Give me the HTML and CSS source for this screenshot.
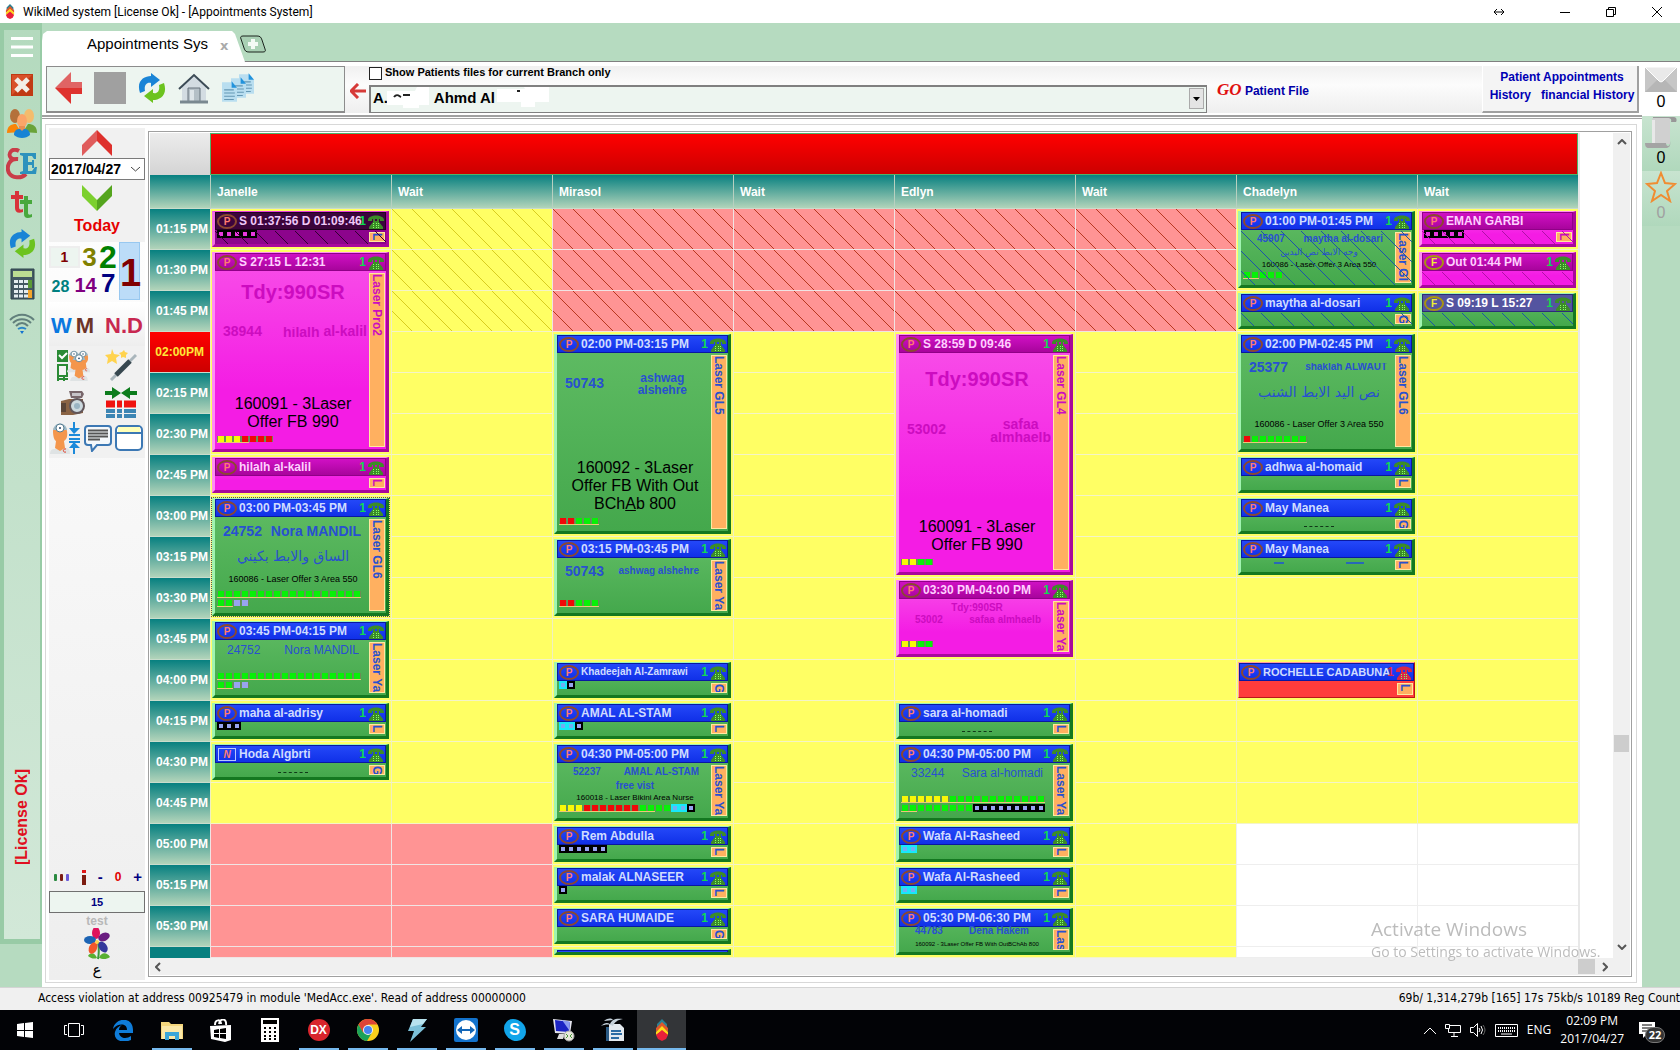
FILE: index.html
```html
<!DOCTYPE html>
<html lang="en">
<head>
    <meta charset="UTF-8">
    <title>WikiMed system [License Ok] - [Appointments System]</title>
    <link rel="stylesheet" href="styles.css">
</head>
<body>
<svg class="defs" aria-hidden="true">
    <symbol id="logo" viewBox="0 0 12 22">
        <path d="M6 0l5 5v4L6 6 1 9V5z" fill="#2a7f92"/>
        <path d="M6 3l6 6v4L6 8l-6 5V9z" fill="#e0562b"/>
        <path d="M6 7l6 6v3l-6-4-6 4v-3z" fill="#ffd91a"/>
        <path d="M6 11l6 5-2 4-4 2-4-2-2-4z" fill="#e8203a"/>
    </symbol>
    <symbol id="phone" viewBox="0 0 16 14">
        <path d="M0 5c0-6 16-6 16 0v1h-4V4H4v2H0z" fill="currentColor"/>
        <path d="M5 4h2v2h2V4h2v3l4 5v2H1v-2l4-5z" fill="currentColor"/>
        <path d="M5 8h1v1H5zM8 8h1v1H8zM10 8h1v1h-1zM5 10h1v1H5zM8 10h1v1H8zM10 10h1v1h-1zM5 12h1v1H5zM8 12h1v1H8zM10 12h1v1h-1z" fill="#8f6"/>
    </symbol>
    <symbol id="sync" viewBox="0 0 28 30">
        <path d="M2 20C-2 8 6 3 13 3V0l9 7-9 7v-4C8 9 6 13 7 18z" fill="#1a84d6"/>
        <path d="M26 10c4 12-4 17-11 17v3l-9-7 9-7v4c5 1 7-3 6-8z" fill="#6cc31f"/>
    </symbol>
    <symbol id="arrow" viewBox="0 0 27 32">
        <path d="M0 16L16 0v10h11v6H0z" fill="#e06464"/>
        <path d="M0 16h27v6H16v10z" fill="#de322e"/>
    </symbol>
    <symbol id="sheet" viewBox="0 0 14 20">
        <path d="M0 1h9l5 5v13H0z" fill="#b9def0"/>
        <path d="M9 0v6h5z" fill="#2293dc"/>
        <path d="M2 8h9M2 11h10M2 14h10M2 17h9" stroke="#6598b4"/>
    </symbol>
    <symbol id="doc" viewBox="0 0 20 32">
        <path d="M4 27c-4 0-4 5-4 5h20c0-4-1-6-5-6z" fill="#dfe3e4"/>
        <path d="M3 9c0-7 13-9 14 0 1 6-1 9-3 10l1 7-5 3-5-3 1-7C4 18 3 14 3 9z" fill="#f4964c"/>
        <path d="M3 8c2-9 13-8 14 0z" fill="#9dbac8"/>
        <circle cx="10" cy="6" r="4" fill="#fff" stroke="#567b8e"/>
        <circle cx="10" cy="6" r="1" fill="#246"/>
        <path d="M16 27c-3-1-4 4 0 3" fill="none" stroke="#e03c28"/>
    </symbol>
</svg>

<header class="titlebar">
    <svg class="logo"><use href="#logo"/></svg>
    <h1>WikiMed system [License Ok] - [Appointments System]</h1>
    <nav class="winbtns">
        <button type="button" aria-label="Resize"><svg width="12" height="8"><path d="M1 4h10M4 1L1 4l3 3M8 1l3 3-3 3" fill="none" stroke="#000"/></svg></button>
        <button type="button" aria-label="Minimize"><svg width="10" height="10"><path d="M0 5.5h10" stroke="#000"/></svg></button>
        <button type="button" aria-label="Restore"><svg width="10" height="10"><path d="M.5 2.5h7v7h-7zM2.500 2.500v-2h7v7h-2" fill="none" stroke="#000"/></svg></button>
        <button type="button" aria-label="Close"><svg width="10" height="10"><path d="M0 0l10 10M10 0L0 10" stroke="#000"/></svg></button>
    </nav>
</header>

<div class="app">
    <aside class="rail">
        <div class="rail-in">
            <button type="button" aria-label="Menu"><svg width="22" height="20"><path d="M0 1.500h22M0 10h22M0 18.500h22" stroke="#fff" stroke-width="3"/></svg></button>
            <button type="button" aria-label="Close page"><svg width="22" height="22"><path d="M0 0h22v22H0z" fill="#c03a14"/><path d="M1 1h20L1 21z" fill="#d8512a"/><path d="M5 5l12 12M17 5L5 17" stroke="#f2eee6" stroke-width="5"/></svg></button>
            <button type="button" aria-label="Patients"><svg width="30" height="30" viewBox="0 0 30 30">
                <ellipse cx="8" cy="7" rx="5" ry="7" fill="#b4713a"/><path d="M0 24c0-7 4-9 9-9l5 8z" fill="#f98508"/>
                <ellipse cx="22" cy="7" rx="5" ry="7" fill="#f4bc6c"/><path d="M30 24c0-7-4-9-9-9l-5 8z" fill="#6aa339"/>
                <ellipse cx="15" cy="12" rx="5" ry="7" fill="#fba568"/><path d="M12 17h6v5h-6z" fill="#e98f52"/><path d="M7 26c0-5 3-6 6-6l2 2 2-2c3 0 6 1 6 6-4 4-12 4-16 0z" fill="#1784d4"/></svg></button>
            <button type="button" aria-label="Language"><svg width="32" height="32" viewBox="0 0 32 32">
                <path d="M13 3C6-1 1 6 5 10c2 2 5 1 7 1-9-1-12 8-9 14 3 5 12 6 17 1" fill="none" stroke="#c93d49" stroke-width="4"/>
                <path d="M14 5h16v6h-2l-2-3h-4v6h4v-2h2v8h-2v-3h-4v6h4l3-4h2l-1 7H14v-2l3-1V8l-3-1z" fill="#2c92bd"/></svg></button>
            <button type="button" aria-label="Text tools"><svg width="22" height="29" viewBox="0 0 22 29">
                <path d="M4 1h4v4h4v4H8v8c0 3 2 3 4 2v3c-5 2-8 0-8-4V9H0V5h4z" fill="#d8333a"/>
                <path d="M13 6h4v4h4v4h-4v9c0 2 2 2 4 1v3c-5 2-8 1-8-3V14H9v-4h4z" fill="#48a83c"/></svg></button>
            <button type="button" aria-label="Refresh"><svg width="27" height="31"><use href="#sync"/></svg></button>
            <button type="button" aria-label="Calculator"><svg width="25" height="32"><path d="M1 1h23v30H1z" fill="#435862" stroke="#2f434d"/><path d="M3 3h19v6H3z" fill="#bcdc92"/><path d="M4 13.500h16M4 18.500h16M4 23.500h16M4 28h16" stroke="#e4edf0" stroke-width="3" stroke-dasharray="4 1"/><path d="M18 12h4v8h-4z" fill="#5b9a36"/><path d="M18 22h4v8h-4z" fill="#f4a52a"/></svg></button>
            <button type="button" aria-label="Network"><svg width="26" height="22" viewBox="0 0 26 22" fill="none" stroke="#62807c" stroke-width="2"><path d="M1 7c7-7 17-7 24 0M4 10c5-5 13-5 18 0M7 13c4-4 8-4 12 0"/><path d="M9 16c3-2 5-2 8 0" stroke="#2a86c8"/><path d="M11 18h4l-2 3z" fill="#1272d0" stroke="none"/></svg></button>
            <span class="license">[License Ok]</span>
        </div>
    </aside>

    <div class="work">
        <div class="tabs">
            <div class="tab"><a href="#">Appointments Sys</a><button type="button" aria-label="Close tab">x</button></div>
            <button type="button" class="newtab" aria-label="New tab"><svg width="26" height="18" viewBox="0 0 26 18"><path d="M3 1h14c3 0 4 1 5 4l3 9c1 2 0 3-2 3H9c-3 0-4-1-5-4L1 4C0 2 1 1 3 1z" fill="#a9d0b4" stroke="#1c241e" stroke-width="1"/><path d="M13 4v10M8 9h10" stroke="#f4faf5" stroke-width="4"/></svg></button>
        </div>
        <div class="page">
            <main class="content">
                <div class="toolbar">
                    <div class="tools">
                        <button type="button" aria-label="Back"><svg width="27" height="32"><use href="#arrow"/></svg></button>
                        <button type="button" aria-label="Stop"><svg width="32" height="32"><path d="M0 0h32v32H0z" fill="#a0a0a0"/></svg></button>
                        <button type="button" aria-label="Refresh"><svg width="28" height="32"><use href="#sync"/></svg></button>
                        <button type="button" aria-label="Home"><svg width="32" height="32" viewBox="0 0 32 32"><path d="M4 14L16 4l12 10v16H4z" fill="#d3dce2"/><path d="M10 16h12v14H10z" fill="#b4bfc6" stroke="#66737c"/><path d="M12 18h4v12h-4z" fill="#dde4e8"/><path d="M1 17L16 3l15 14" fill="none" stroke="#3c4b56" stroke-width="2"/><path d="M2 30h28" stroke="#7a8890" stroke-width="3"/></svg></button>
                        <button type="button" aria-label="Files"><svg width="32" height="30"><use href="#sheet" x="17" y="0" width="15" height="22"/><use href="#sheet" x="9" y="4" width="15" height="22"/><use href="#sheet" x="0" y="8" width="15" height="22"/></svg></button>
                    </div>
                    <div class="finder">
                        <button type="button" class="pick" aria-label="Choose"><svg width="16" height="16"><path d="M16 8H2M8 1L1 8l7 7" fill="none" stroke="#d63a38" stroke-width="3"/></svg></button>
                        <div class="fields">
                            <label><input type="checkbox">Show Patients files for current Branch only</label>
                            <div class="combo">
                                <select aria-label="Patient"><option>A.&nbsp;&nbsp;&nbsp;&nbsp;&nbsp;&nbsp;&nbsp;&nbsp;&nbsp;&nbsp;&nbsp;Ahmd Al</option></select>
                                <svg class="smudge" width="180" height="24"><path d="M16 4h28l2-4h12v18H48v3H32v-3H16zM126 2h28l-1-2h25v15h-14v5h-14v-5h-24z" fill="#fff"/><path d="M23 10c3-4 5-1 7 0M32 8h7M146 4h3" fill="none" stroke="#222" stroke-width="2"/></svg>
                                <span class="drop"><svg width="7" height="4"><path d="M0 0h7L3.500 4z"/></svg></span>
                            </div>
                        </div>
                        <a class="go" href="#"><i>GO</i> Patient File</a>
                    </div>
                    <div class="links">
                        <a href="#">Patient Appointments</a>
                        <span><a href="#">History</a><a href="#">financial History</a></span>
                    </div>
                </div>

                <div class="frame">
                    <aside class="side">
                        <div class="days">
                            <button type="button" aria-label="Previous day"><svg width="30" height="26"><path d="M15 0v11L0 26V15z" fill="#e05c5c"/><path d="M15 0l15 15v11L15 11z" fill="#de302c"/></svg></button>
                            <div class="date"><input type="text" value="2017/04/27" aria-label="Date"><svg width="9" height="5"><path d="M0 0l4.500 4L9 0" fill="none" stroke="#444"/></svg></div>
                            <button type="button" aria-label="Next day"><svg width="30" height="26"><path d="M0 0l15 15v11L0 11z" fill="#7cd02e"/><path d="M30 0L15 15v11l15-15z" fill="#55a51e"/></svg></button>
                            <a class="today" href="#">Today</a>
                        </div>
                        <div class="jump">
                            <div class="steps">
                                <p><button type="button" class="n1s">1</button><button type="button" class="n3">3</button><button type="button" class="n2">2</button></p>
                                <p><button type="button" class="n28">28</button><button type="button" class="n14">14</button><button type="button" class="n7">7</button></p>
                            </div>
                            <button type="button" class="n1">1</button>
                        </div>
                        <div class="spans"><button type="button" class="w">W</button><button type="button" class="m">M</button><button type="button" class="nd">N.D</button></div>
                        <div class="acts two">
                            <button type="button" aria-label="Doctors"><svg width="34" height="32"><path d="M1 1h11v12H1z" fill="#2a8a34"/><path d="M3 6l3 3 5-5" fill="none" stroke="#fff" stroke-width="2"/><path d="M2 16h9v11H2z" fill="#f4f4f4" stroke="#2a8a34" stroke-width="2"/><path d="M1 30h11M2 28v4M8 28v4" stroke="#2a8a34" stroke-width="2"/><use href="#doc" x="11" y="0" width="14" height="24"/><use href="#doc" x="20" y="0" width="14" height="24"/><use href="#doc" x="14" y="4" width="18" height="28"/></svg></button>
                            <button type="button" aria-label="Wizard"><svg width="32" height="32"><path d="M7 0l2 5 6 1-4 3 1 6-5-3-5 3 1-6-3-3 6-1z" fill="#ffd34e"/><path d="M19 1l1 2 3 1-2 2v3l-3-1-2 1v-3l-2-2 3-1z" fill="#ffd34e"/><path d="M6 31L31 6" stroke="#aab6bc" stroke-width="3"/><path d="M11 26L25 12" stroke="#37474f" stroke-width="5"/></svg></button>
                            <button type="button" aria-label="Camera"><svg width="26" height="26" viewBox="0 0 26 26"><path d="M9 1h13l2 3-2 4H11z" fill="#78666a"/><path d="M12 3h9v3h-9z" fill="#c7c4c8"/><path d="M1 11l8-2h14v14l-10 2H1z" fill="#8a6344"/><path d="M1 13h5v9H1z" fill="#5b4537"/><circle cx="17" cy="16" r="7" fill="#ccd9df" stroke="#61565a" stroke-width="2"/><circle cx="17" cy="16" r="3" fill="#9ab4c4"/></svg></button>
                            <button type="button" aria-label="Merge columns"><svg width="32" height="32"><path d="M0 4h7V0l9 6-9 6V8H0zM32 4h-7V0l-9 6 9 6V8h7z" fill="#0c7c1c"/><path d="M1 17h9M12 17h5M19 17h12" stroke="#f01410" stroke-width="7"/><path d="M1 24h9M12 24h5M19 24h12M1 29h9M12 29h5M19 29h12" stroke="#3d86b4" stroke-width="4"/></svg></button>
                        </div>
                        <div class="acts three">
                            <button type="button" aria-label="Move patient"><svg width="31" height="32"><use href="#doc" x="0" y="0" width="22" height="32"/><path d="M25 0v8M25 24v8M20 13h11M20 17h11M20 20h11" stroke="#1c8ada" stroke-width="2"/><path d="M20 6h11l-6 6zM20 26h11l-6-6z" fill="#1c8ada"/></svg></button>
                            <button type="button" aria-label="Notes"><svg width="28" height="28"><path d="M4 2h20c2 0 3 1 3 3v13c0 2-1 3-3 3H13l-5 6-1-6H4c-2 0-3-1-3-3V5c0-2 1-3 3-3z" fill="#f4f8fb" stroke="#3c78b4" stroke-width="2"/><path d="M4 6.500h20M4 9.500h20M4 12.500h20M4 15.500h12" stroke="#555" stroke-width="2"/></svg></button>
                            <button type="button" aria-label="Window"><svg width="28" height="26"><rect x="1" y="1" width="26" height="24" rx="4" fill="#fff" stroke="#3c78b4" stroke-width="2"/><path d="M3 2h22v5H3z" fill="#ffffb8"/><path d="M1 8h26" stroke="#3c78b4" stroke-width="2"/></svg></button>
                        </div>
                        <div class="foot">
                            <div class="zoom">
                                <svg width="16" height="7"><rect width="3" height="7" rx="1" fill="#2a8a40"/><rect x="6" width="3" height="7" rx="1" fill="#7c1c14"/><rect x="12" width="3" height="7" rx="1" fill="#6a5ad8"/></svg>
                                <svg width="4" height="15"><path d="M2 0v3" stroke="#e01818" stroke-width="4"/><path d="M2 5v10" stroke="#7c1c10" stroke-width="4"/></svg>
                                <button type="button">-</button><span>0</span><button type="button">+</button>
                            </div>
                            <input type="text" value="15" aria-label="Minutes per slot">
                            <span class="test">test</span>
                            <svg width="26" height="32" viewBox="0 0 26 32"><path d="M14 14c1 6 1 12 0 17" stroke="#3c9a3c" stroke-width="2" fill="none"/><path d="M13 30c-2-6-7-6-9-2 4 3 6 3 9 2zM15 30c2-6 8-6 11-1-4 3-8 2-11 1z" fill="#58b032"/><ellipse cx="12" cy="5" rx="4" ry="6" fill="#e0125c"/><ellipse cx="20" cy="9" rx="6" ry="4" transform="rotate(-25 20 9)" fill="#6a1c80"/><ellipse cx="6" cy="12" rx="6" ry="4" fill="#1c64b4"/><ellipse cx="9" cy="20" rx="4" ry="6" transform="rotate(25 9 20)" fill="#f0582c"/><ellipse cx="19" cy="19" rx="4" ry="6" transform="rotate(-35 19 19)" fill="#34389c"/><circle cx="13" cy="14" r="2" fill="#ffd34e"/></svg>
                            <span class="ain" lang="ar">ع</span>
                        </div>
                    </aside>

                    <section class="panel">
                        <div class="sheet">
                            <div class="viewport">
                                <table class="schedule">
                                    <colgroup><col class="time"><col class="doc"><col class="wait"><col class="doc"><col class="wait"><col class="doc"><col class="wait"><col class="doc"><col class="wait"></colgroup>
                                    <thead>
                                    <tr class="banner"><th class="corner"></th><th class="red" colspan="8"></th></tr>
                                    <tr class="names"><th></th><th>Janelle</th><th>Wait</th><th>Mirasol</th><th>Wait</th><th>Edlyn</th><th>Wait</th><th>Chadelyn</th><th>Wait</th></tr>
                                    </thead>
                                    <tbody>
                                    <tr>
                                        <th>01:15 PM</th>
                                        <td><div class="card plum past"><div class="head"><b>P</b><span>S 01:37:56 D 01:09:46</span><em>1</em><svg><use href="#phone"/></svg></div><div class="body"><div class="info"><div class="dots"><i class="k" style="--n:5"></i></div></div><div class="room">L</div></div></div></td>
                                        <td class="gone"></td>
                                        <td class="off gone"></td><td class="off gone"></td><td class="off gone"></td><td class="off gone"></td>
                                        <td rowspan="2"><div class="card past"><div class="head"><b>P</b><span>01:00 PM-01:45 PM</span><em>1</em><svg><use href="#phone"/></svg></div><div class="body"><div class="info"><div class="pair small"><span>45907</span><span>maytha al-dosari</span></div><p class="ar tiny" lang="ar">وجه الابط نص اليدين</p><p class="offer mini tight">160086 - Laser Offer 3 Area 550</p><div class="dots"><i class="g u" style="--n:2"></i><i class="g" style="--n:3"></i></div></div><div class="room">Laser Gl</div></div></div></td>
                                        <td><div class="card pink past"><div class="head"><b>P</b><span>EMAN GARBI</span></div><div class="body"><div class="info"><div class="dots"><i class="k" style="--n:5"></i></div></div><div class="room">L</div></div></div></td>
                                    </tr>
                                    <tr>
                                        <th>01:30 PM</th>
                                        <td rowspan="5"><div class="card pink"><div class="head"><b>P</b><span>S 27:15 L 12:31</span><em>1</em><svg><use href="#phone"/></svg></div><div class="body"><div class="info"><p class="due">Tdy:990SR</p><div class="pair"><span>38944</span><span><span class="cut">hilalh</span> al-kalil</span></div><p class="offer">160091 - 3Laser Offer FB 990</p><div class="dots"><i class="y u" style="--n:3"></i><i class="r u" style="--n:1"></i><i class="r" style="--n:3"></i></div></div><div class="room">Laser Pro2</div></div></div></td>
                                        <td class="gone"></td>
                                        <td class="off gone"></td><td class="off gone"></td><td class="off gone"></td><td class="off gone"></td>
                                        <td><div class="card pink past"><div class="head"><b class="f">F</b><span>Out 01:44 PM</span><em>1</em><svg><use href="#phone"/></svg></div></div></td>
                                    </tr>
                                    <tr>
                                        <th>01:45 PM</th>
                                        <td class="gone"></td>
                                        <td class="off gone"></td><td class="off gone"></td><td class="off gone"></td><td class="off gone"></td>
                                        <td><div class="card past"><div class="head"><b>P</b><span>maytha al-dosari</span><em>1</em><svg><use href="#phone"/></svg></div><div class="body"><div class="info"></div><div class="room">G</div></div></div></td>
                                        <td><div class="card late past"><div class="head"><b class="f">F</b><span>S 09:19 L 15:27</span><em>1</em><svg><use href="#phone"/></svg></div></div></td>
                                    </tr>
                                    <tr>
                                        <th class="now">02:00PM</th>
                                        <td></td>
                                        <td rowspan="5"><div class="card"><div class="head"><b>P</b><span>02:00 PM-03:15 PM</span><em>1</em><svg><use href="#phone"/></svg></div><div class="body"><div class="info"><div class="pair tall"><span>50743</span><span class="name">ashwag <span class="cut">alshehre</span></span></div><p class="offer">160092 - 3Laser Offer FB With Out BCh<u>A</u>b 800</p><div class="dots"><i class="r u" style="--n:2"></i><i class="g u" style="--n:3"></i></div></div><div class="room">Laser GL5</div></div></div></td>
                                        <td></td>
                                        <td rowspan="6"><div class="card pink"><div class="head"><b>P</b><span>S 28:59 D 09:46</span><em>1</em><svg><use href="#phone"/></svg></div><div class="body"><div class="info"><p class="due tall">Tdy:990SR</p><div class="pair"><span>53002</span><span class="name big">safaa <span class="cut">almhaelb</span></span></div><p class="offer">160091 - 3Laser Offer FB 990</p><div class="dots"><i class="y" style="--n:2"></i><i class="g" style="--n:2"></i></div></div><div class="room">Laser GL4</div></div></div></td>
                                        <td></td>
                                        <td rowspan="3"><div class="card"><div class="head"><b>P</b><span>02:00 PM-02:45 PM</span><em>1</em><svg><use href="#phone"/></svg></div><div class="body"><div class="info"><div class="pair mid"><span>25377</span><span class="cut narrow">shaklah ALWAUT</span></div><p class="ar" lang="ar">نص اليد الابط الشنب</p><p class="offer mini">160086 - Laser Offer 3 Area 550</p><div class="dots"><i class="r u" style="--n:1"></i><i class="g u" style="--n:7"></i></div></div><div class="room">Laser GL6</div></div></div></td>
                                        <td></td>
                                    </tr>
                                    <tr><th>02:15 PM</th><td></td><td></td><td></td><td></td></tr>
                                    <tr><th>02:30 PM</th><td></td><td></td><td></td><td></td></tr>
                                    <tr>
                                        <th>02:45 PM</th>
                                        <td><div class="card pink"><div class="head"><b>P</b><span>hilalh al-kalil</span><em>1</em><svg><use href="#phone"/></svg></div><div class="body"><div class="info"></div><div class="room">L</div></div></div></td>
                                        <td></td><td></td><td></td>
                                        <td><div class="card"><div class="head"><b>P</b><span>adhwa al-homaid</span><em>1</em><svg><use href="#phone"/></svg></div><div class="body"><div class="info"></div><div class="room">L</div></div></div></td>
                                        <td></td>
                                    </tr>
                                    <tr>
                                        <th>03:00 PM</th>
                                        <td rowspan="3"><div class="card picked"><div class="head"><b>P</b><span>03:00 PM-03:45 PM</span><em>1</em><svg><use href="#phone"/></svg></div><div class="body"><div class="info"><div class="pair mid"><span>24752</span><span class="cut">Nora MANDIL</span></div><p class="ar" lang="ar">الساق والابط بكيني</p><p class="offer mini">160086 - Laser Offer 3 Area 550</p><div class="dots"><i class="g u" style="--n:18"></i><i class="g u" style="--n:2"></i><i class="l" style="--n:2"></i></div></div><div class="room">Laser GL6</div></div></div></td>
                                        <td></td><td></td><td></td>
                                        <td><div class="card"><div class="head"><b>P</b><span>May Manea</span><em>1</em><svg><use href="#phone"/></svg></div><div class="body"><div class="info"><div class="trace"></div></div><div class="room">G</div></div></div></td>
                                        <td></td>
                                    </tr>
                                    <tr>
                                        <th>03:15 PM</th>
                                        <td></td>
                                        <td rowspan="2"><div class="card"><div class="head"><b>P</b><span>03:15 PM-03:45 PM</span><em>1</em><svg><use href="#phone"/></svg></div><div class="body"><div class="info"><div class="pair short"><span>50743</span><span class="sm">ashwag alshehre</span></div><div class="dots"><i class="r u" style="--n:2"></i><i class="g u" style="--n:3"></i></div></div><div class="room">Laser Ya</div></div></div></td>
                                        <td></td><td></td>
                                        <td><div class="card"><div class="head"><b>P</b><span>May Manea</span><em>1</em><svg><use href="#phone"/></svg></div><div class="body"><div class="info"><div class="trace blue"></div></div><div class="room">L</div></div></div></td>
                                        <td></td>
                                    </tr>
                                    <tr>
                                        <th>03:30 PM</th>
                                        <td></td><td></td>
                                        <td rowspan="2"><div class="card pink"><div class="head"><b>P</b><span>03:30 PM-04:00 PM</span><em>1</em><svg><use href="#phone"/></svg></div><div class="body"><div class="info"><p class="due little">Tdy:990SR</p><div class="pair small low"><span>53002</span><span>safaa almhaelb</span></div><div class="dots"><i class="y" style="--n:2"></i><i class="g" style="--n:2"></i></div></div><div class="room">Laser Ya</div></div></div></td>
                                        <td></td><td></td><td></td>
                                    </tr>
                                    <tr>
                                        <th>03:45 PM</th>
                                        <td rowspan="2"><div class="card"><div class="head"><b>P</b><span>03:45 PM-04:15 PM</span><em>1</em><svg><use href="#phone"/></svg></div><div class="body"><div class="info"><div class="pair thin"><span>24752</span><span class="cut">Nora MANDIL</span></div><div class="dots"><i class="g u" style="--n:18"></i><i class="g u" style="--n:2"></i><i class="l" style="--n:2"></i></div></div><div class="room">Laser Ya</div></div></div></td>
                                        <td></td><td></td><td></td><td></td><td></td><td></td>
                                    </tr>
                                    <tr>
                                        <th>04:00 PM</th>
                                        <td></td>
                                        <td><div class="card"><div class="head"><b>P</b><span class="sm">Khadeejah Al-Zamrawi</span><em>1</em><svg><use href="#phone"/></svg></div><div class="body"><div class="info"><div class="dots"><i class="c" style="--n:1"></i><i class="k" style="--n:1"></i></div></div><div class="room">G</div></div></div></td>
                                        <td></td><td></td><td></td>
                                        <td><div class="card red"><div class="head"><b>P</b><span class="long">ROCHELLE CADABUNA</span><em>1</em><svg><use href="#phone"/></svg></div><div class="body"><div class="info"></div><div class="room">L</div></div></div></td>
                                        <td></td>
                                    </tr>
                                    <tr>
                                        <th>04:15 PM</th>
                                        <td><div class="card"><div class="head"><b>P</b><span>maha al-adrisy</span><em>1</em><svg><use href="#phone"/></svg></div><div class="body"><div class="info"><div class="dots"><i class="k" style="--n:3"></i></div></div><div class="room">L</div></div></div></td>
                                        <td></td>
                                        <td><div class="card"><div class="head"><b>P</b><span>AMAL AL-STAM</span><em>1</em><svg><use href="#phone"/></svg></div><div class="body"><div class="info"><div class="dots"><i class="c" style="--n:2"></i><i class="k" style="--n:1"></i></div></div><div class="room">L</div></div></div></td>
                                        <td></td>
                                        <td><div class="card"><div class="head"><b>P</b><span>sara al-homadi</span><em>1</em><svg><use href="#phone"/></svg></div><div class="body"><div class="info"><div class="trace"></div></div><div class="room">L</div></div></div></td>
                                        <td></td><td></td><td></td>
                                    </tr>
                                    <tr>
                                        <th>04:30 PM</th>
                                        <td><div class="card"><div class="head"><b class="n">N</b><span>Hoda Algbrti</span><em>1</em><svg><use href="#phone"/></svg></div><div class="body"><div class="info"><div class="trace"></div></div><div class="room">G</div></div></div></td>
                                        <td></td>
                                        <td rowspan="2"><div class="card"><div class="head"><b>P</b><span>04:30 PM-05:00 PM</span><em>1</em><svg><use href="#phone"/></svg></div><div class="body"><div class="info"><div class="pair small"><span>52237</span><span class="cut">AMAL AL-STAM</span></div><p class="note">free vist</p><p class="offer mini tight">160018 - Laser Bikini Area Nurse</p><div class="dots"><i class="y u" style="--n:3"></i><i class="r u" style="--n:7"></i><i class="g u" style="--n:2"></i><i class="g" style="--n:2"></i><i class="c" style="--n:2"></i><i class="k" style="--n:1"></i></div></div><div class="room">Laser Ya</div></div></div></td>
                                        <td></td>
                                        <td rowspan="2"><div class="card"><div class="head"><b>P</b><span>04:30 PM-05:00 PM</span><em>1</em><svg><use href="#phone"/></svg></div><div class="body"><div class="info"><div class="pair thin"><span>33244</span><span class="cut">Sara al-homadi</span></div><div class="dots"><i class="y u" style="--n:6"></i><i class="g u" style="--n:12"></i><i class="g u" style="--n:2"></i><i class="g" style="--n:7"></i><i class="k" style="--n:9"></i></div></div><div class="room">Laser Ya</div></div></div></td>
                                        <td></td><td></td><td></td>
                                    </tr>
                                    <tr><th>04:45 PM</th><td></td><td></td><td></td><td></td><td></td><td></td></tr>
                                    <tr>
                                        <th>05:00 PM</th>
                                        <td class="off"></td><td class="off"></td>
                                        <td><div class="card"><div class="head"><b>P</b><span>Rem Abdulla</span><em>1</em><svg><use href="#phone"/></svg></div><div class="body"><div class="info"><div class="dots"><i class="k" style="--n:6"></i></div></div><div class="room">L</div></div></div></td>
                                        <td></td>
                                        <td><div class="card"><div class="head"><b>P</b><span>Wafa Al-Rasheed</span><em>1</em><svg><use href="#phone"/></svg></div><div class="body"><div class="info"><div class="dots"><i class="c" style="--n:2"></i></div></div><div class="room">L</div></div></div></td>
                                        <td></td><td class="free"></td><td class="free"></td>
                                    </tr>
                                    <tr>
                                        <th>05:15 PM</th>
                                        <td class="off"></td><td class="off"></td>
                                        <td><div class="card"><div class="head"><b>P</b><span>malak ALNASEER</span><em>1</em><svg><use href="#phone"/></svg></div><div class="body"><div class="info"><div class="dots"><i class="k" style="--n:1"></i></div></div><div class="room">L</div></div></div></td>
                                        <td></td>
                                        <td><div class="card"><div class="head"><b>P</b><span>Wafa Al-Rasheed</span><em>1</em><svg><use href="#phone"/></svg></div><div class="body"><div class="info"><div class="dots"><i class="c" style="--n:2"></i></div></div><div class="room">L</div></div></div></td>
                                        <td></td><td class="free"></td><td class="free"></td>
                                    </tr>
                                    <tr>
                                        <th>05:30 PM</th>
                                        <td class="off"></td><td class="off"></td>
                                        <td><div class="card"><div class="head"><b>P</b><span>SARA HUMAIDE</span><em>1</em><svg><use href="#phone"/></svg></div><div class="body"><div class="info"></div><div class="room">G</div></div></div></td>
                                        <td></td>
                                        <td rowspan="2"><div class="card"><div class="head"><b>P</b><span>05:30 PM-06:30 PM</span><em>1</em><svg><use href="#phone"/></svg></div><div class="body"><div class="info"><div class="pair small clip"><span>44783</span><span>Dena Hakem</span></div><p class="offer micro">160092 - 3Laser Offer FB With OutBChAb 800</p></div><div class="room">Lase</div></div></div></td>
                                        <td></td><td class="free"></td><td class="free"></td>
                                    </tr>
                                    <tr class="rest">
                                        <th></th>
                                        <td class="off"></td><td class="off"></td>
                                        <td><div class="card"><div class="head"></div></div></td>
                                        <td></td><td></td><td class="free"></td><td class="free"></td>
                                    </tr>
                                    </tbody>
                                </table>
                            </div>
                            <div class="vbar">
                                <svg width="10" height="6"><path d="M1 5l4-4 4 4" fill="none" stroke="#555" stroke-width="2"/></svg>
                                <span></span>
                                <svg width="10" height="6"><path d="M1 1l4 4 4-4" fill="none" stroke="#555" stroke-width="2"/></svg>
                            </div>
                        </div>
                        <div class="hbar">
                            <svg width="6" height="10"><path d="M5 1L1 5l4 4" fill="none" stroke="#555" stroke-width="2"/></svg>
                            <span></span>
                            <svg width="6" height="10"><path d="M1 1l4 4-4 4" fill="none" stroke="#555" stroke-width="2"/></svg>
                        </div>
                    </section>
                </div>
            </main>

            <aside class="alerts">
                <a class="mail" href="#"><svg width="32" height="25"><path d="M0 0h32v25H0z" fill="#c6c6c6"/><path d="M0 25L16 9l16 16z" fill="#b6b6b6"/><path d="M0 0h32L18 14q-2 2-4 0z" fill="#e9e9e9" stroke="#fff"/></svg>0</a>
                <a href="#"><svg width="32" height="32"><path d="M9 1h16v27H7V4c0-2 1-3 2-3z" fill="#d0d0d0"/><path d="M7 4h3v24H7z" fill="#e8e8e8"/><path d="M8 1h21c3 0 3 4 2 5h-5c1-3-1-4-3-4H8z" fill="#989898"/><path d="M0 27h21c0 4 4 4 4 0v-2c1 5-1 7-4 7H4c-3 0-4-2-4-5z" fill="#a4a4a4"/></svg>0</a>
                <a class="none" href="#"><svg width="32" height="32"><path d="M16 2l4 10 10 1-8 7 3 10-9-6-9 6 3-10-8-7 10-1z" fill="none" stroke="#f08c32" stroke-width="2"/></svg>0</a>
            </aside>
        </div>
    </div>
</div>

<footer class="status">
    <span>Access violation at address 00925479 in module 'MedAcc.exe'. Read of address 00000000</span>
    <span>69b/ 1,314,279b [165] 17s 75kb/s 10189 Reg Count</span>
</footer>

<nav class="taskbar">
    <button type="button" aria-label="Start"><svg width="16" height="16"><path d="M0 2l7-1v7H0zM8 1l8-1v8H8zM0 9h7v6l-7-1zM8 9h8v7l-8-1z" fill="#fff"/></svg></button>
    <button type="button" class="view" aria-label="Task view"><svg width="20" height="14" fill="none" stroke="#fff"><path d="M4.500.5h11v13h-11zM3 2.500H.5v9H3M17 2.500h2.500v9H17"/></svg></button>
    <button type="button" aria-label="Edge"><svg width="20" height="21" viewBox="0 0 20 21"><path d="M0 9C2-3 20-4 20 10v3H6c1 6 8 6 12 3v4C9 24 0 20 2 12c1-4 4-6 7-7-2 1-3 3-3 5h8C14 3 5 3 0 9z" fill="#0f7cd8"/></svg></button>
    <button type="button" class="open" aria-label="Explorer"><svg width="22" height="19"><path d="M0 1h8l2 2h12v15H0z" fill="#f4d67c"/><path d="M1 5h20v13H1z" fill="#fbe8a8"/><path d="M4 11h14v8h-4v-4H8v4H4z" fill="#3aa6d8"/></svg></button>
    <button type="button" aria-label="Store"><svg width="22" height="23"><path d="M5 6c0-6 6-6 6-1M9 5c1-6 8-6 7 1" fill="none" stroke="#fff" stroke-width="2"/><path d="M0 7l21-1v15l-6 2-14-3z" fill="#fff"/><path d="M4 11l5-1v4H4zM10 10l6-1v5h-6zM4 15h5v4l-5-1zM10 15h6v5l-6-1z" fill="#000"/></svg></button>
    <button type="button" aria-label="Calculator"><svg width="18" height="24"><path d="M0 0h18v24H0z" fill="#fff"/><path d="M2 2h14v4H2z" fill="#000"/><path d="M3 10h13M3 14h13M3 18h13M3 21h13" stroke="#000" stroke-width="2" stroke-dasharray="2 3"/></svg></button>
    <button type="button" class="open" aria-label="DX"><span class="dx">DX</span></button>
    <button type="button" class="open" aria-label="Chrome"><svg width="22" height="22" viewBox="0 0 22 22"><circle cx="11" cy="11" r="11" fill="#f9cf1c"/><path d="M1.500 5.500a11 11 0 0 1 19 0H11L6 14z" fill="#dd4436"/><path d="M1.500 5.500A11 11 0 0 0 10 22l5-8.500H6z" fill="#1ba259"/><circle cx="11" cy="11" r="5" fill="#f2f2f2"/><circle cx="11" cy="11" r="4" fill="#4684f0"/></svg></button>
    <button type="button" class="open" aria-label="Bolt"><svg width="20" height="23"><path d="M6 0h14l-6 8h5L3 23l4-11H1z" fill="#7cc0d8"/><path d="M6 0h14l-4 5-13 3z" fill="#b8e2ee"/></svg></button>
    <button type="button" class="open" aria-label="TeamViewer"><svg width="24" height="24"><rect width="24" height="24" rx="2" fill="#1272cc"/><circle cx="12" cy="12" r="10" fill="#fff"/><path d="M3 12l5-4v3h8V8l5 4-5 4v-3H8v3z" fill="#1266b8"/></svg></button>
    <button type="button" class="open" aria-label="Skype"><span class="skype">S</span></button>
    <button type="button" class="open" aria-label="Remote desktop"><svg width="22" height="24"><path d="M0 1l19 2-2 13-15-1z" fill="#e4e4ee"/><path d="M2 2l15 2-1 10-13-1z" fill="#1c24c4"/><path d="M9 2l8 2-1 8z" fill="#8c9cf0"/><path d="M6 16h6l-2 5H4z" fill="#ddd"/><circle cx="16" cy="18" r="5" fill="#e8e8dc" stroke="#aaa"/><path d="M13 20l2-2-2-2M19 20l-2-2 2-2" stroke="#4a9a3c" fill="none"/></svg></button>
    <button type="button" class="open" aria-label="Writer"><svg width="24" height="24"><path d="M5 9h4v14H5z" fill="#2a5a84"/><path d="M8 6h11l4 4v13H8z" fill="#e4eaf0"/><path d="M10 13h10M10 16h11M10 20h8" stroke="#2c6ca4" stroke-width="2"/><path d="M0 8c3-3 6-4 9-2 2-5 6-6 13-5-6 1-8 3-10 7-4-2-7-2-12 0zM3 3c4-3 7-3 9-1" fill="#c4d0da"/></svg></button>
    <button type="button" class="open active" aria-label="WikiMed"><svg width="12" height="24"><use href="#logo"/></svg></button>
    <div class="tray">
        <svg width="12" height="7"><path d="M0 7l6-6 6 6" fill="none" stroke="#fff"/></svg>
        <svg width="16" height="14" fill="none" stroke="#fff"><path d="M5 2.500h10.500v7H3.500V6M9 10v3M6 13.500h7M.5 1.500h4v4h-4z"/></svg>
        <svg width="16" height="14" fill="none" stroke="#fff"><path d="M.5 4.500h3l4-4v13l-4-4h-3z"/><path d="M9 5q2 2 0 4M11 3q3 4 0 8" /><path d="M13 2q4 5 0 10" stroke="#666"/></svg>
        <svg width="23" height="13" fill="none" stroke="#fff"><path d="M.5.5h22v12H.5z"/><path d="M3 4h17M3 7h17" stroke-dasharray="1 1" stroke-width="2"/><path d="M6 10h11"/></svg>
        <span>ENG</span>
        <time>02:09 PM<br>2017/04/27</time>
        <button type="button" class="notes" aria-label="Notifications"><svg width="16" height="16"><path d="M0 0h16v12H8l-4 4v-4H0z" fill="#fff"/><path d="M3 3h10M3 6h10M3 9h6" stroke="#000"/></svg><span>22</span></button>
    </div>
</nav>

<div class="watermark"><strong>Activate Windows</strong>Go to Settings to activate Windows.</div>
</body>
</html>
```
FILE: styles.css
```css
* {
    margin: 0;
    padding: 0;
    box-sizing: border-box;
}
body {
    display: flex;
    flex-direction: column;
    min-height: 100vh;
    background: #b6dbc0;
    font: 12px/16px "Liberation Sans", Arial, sans-serif;
    color: #000;
}
button {
    border: 0;
    background: none;
    font: inherit;
    color: inherit;
}
a {
    color: inherit;
    text-decoration: none;
}
svg {
    display: block;
    flex: none;
}
.defs {
    position: absolute;
    width: 0;
    height: 0;
}

/* window title */
.titlebar {
    display: flex;
    align-items: center;
    height: 23px;
    padding-left: 5px;
    background: #fff;
}
.titlebar .logo {
    width: 10px;
    height: 15px;
}
.titlebar h1 {
    margin-left: 8px;
    font-family: Roboto, "Noto Sans", sans-serif;
    font-size: 12px;
    font-weight: normal;
}
.winbtns {
    display: flex;
    margin-left: auto;
}
.winbtns button {
    display: flex;
    align-items: center;
    justify-content: center;
    width: 46px;
    height: 20px;
}
.winbtns button:first-child {
    width: 86px;
}

.app {
    display: flex;
    flex: 1;
}

/* green rail */
.rail {
    width: 42px;
    padding: 7px 2px 5px 4px;
    margin-bottom: 43px;
    background: #98cba6;
}
.rail-in {
    display: flex;
    flex-direction: column;
    align-items: center;
    gap: 9px;
    height: 100%;
    padding-top: 7px;
    background: linear-gradient(#b4dabe, #d2e8d8);
}
.rail-in button {
    display: flex;
    align-items: center;
    justify-content: center;
    min-height: 30px;
}
.rail-in button:first-child {
    min-height: 20px;
    margin-bottom: 4px;
}
.license {
    margin-top: auto;
    margin-bottom: 74px;
    writing-mode: vertical-rl;
    transform: rotate(180deg);
    font-size: 16px;
    font-weight: bold;
    color: #e01020;
}

/* tabs */
.work {
    display: flex;
    flex-direction: column;
    flex: 1;
    min-width: 0;
}
.tabs {
    display: flex;
    align-items: flex-end;
    height: 39px;
    background: linear-gradient(#808080, #808080) bottom / 100% 1px no-repeat;
}
.tab {
    display: flex;
    align-items: center;
    gap: 12px;
    width: 203px;
    height: 31px;
    padding: 0 0 5px 45px;
    background: #fff;
    clip-path: polygon(0 10px, 1px 3px, 5px 0, 190px 0, 193px 3px, 100% 100%, 0 100%);
    font-size: 15px;
}
.tab button {
    font: bold 13px/16px "DejaVu Sans", sans-serif;
    color: #aaa;
    padding-top: 4px;
}
.newtab {
    margin: 0 0 9px -5px;
}

.page {
    display: flex;
    flex: 1;
}
.content {
    display: flex;
    flex-direction: column;
    flex: 1;
    min-width: 0;
    padding-bottom: 4px;
    background: #fff;
}

/* toolbar */
.toolbar {
    display: flex;
    height: 55px;
    padding: 4px 3px 2px 4px;
    border-bottom: 2px solid #a0a0a0;
}
.tools {
    display: flex;
    align-items: center;
    gap: 12px;
    width: 299px;
    padding: 0 0 2px 8px;
    border: 1px solid #8c8c8c;
    border-width: 1px 1px 2px;
    background: #edf5f0;
}
.finder {
    display: flex;
    align-items: center;
    flex: 1;
    padding-left: 5px;
    background: linear-gradient(#f0f0f0, #fcfcfc 40%, #eee);
}
.pick {
    margin-right: 3px;
    padding-top: 2px;
}
.fields {
    width: 838px;
}
.fields label {
    display: flex;
    align-items: flex-start;
    height: 19px;
    font-size: 11px;
    font-weight: bold;
    line-height: 12px;
}
.fields label input {
    appearance: none;
    width: 13px;
    height: 13px;
    margin: 1px 3px 0 0;
    border: 1px solid #222;
    background: #fff;
}
.combo {
    position: relative;
    display: flex;
}
.combo select {
    appearance: none;
    width: 100%;
    height: 28px;
    padding: 0 0 4px 2px;
    border: 2px solid #808080;
    border-width: 2px 1px 1px 2px;
    border-radius: 0;
    background: #edf5f0;
    font: bold 15px/20px "Liberation Sans", Arial, sans-serif;
    color: #000;
}
.smudge {
    position: absolute;
    left: 2px;
    top: 2px;
    pointer-events: none;
}
.drop {
    position: absolute;
    right: 3px;
    top: 3px;
    display: flex;
    align-items: center;
    justify-content: center;
    width: 15px;
    height: 21px;
    border: 1px solid #aaa;
    background: #e4e4e4;
    pointer-events: none;
}
.go {
    margin-left: 10px;
    font-weight: bold;
    color: #0000a8;
}
.go i {
    font: italic bold 17px/20px "Liberation Serif", serif;
    color: #e01010;
}
.links {
    display: flex;
    flex-direction: column;
    align-items: center;
    gap: 2px;
    width: 157px;
    padding: 3px 0 0 4px;
    border-left: 1px solid #fff;
    border-right: 2px solid #a0a0a0;
    border-bottom: 2px solid #a0a0a0;
    background: #f4f4f4;
    font-weight: bold;
    color: #0000b4;
    white-space: nowrap;
}
.links span {
    display: flex;
    gap: 10px;
}

/* workspace frame */
.frame {
    display: flex;
    flex: 1;
    gap: 3px;
    margin: 1px 0 0;
    padding: 9px 10px 3px 7px;
    border-top: 1px solid #a0a0a0;
    background: linear-gradient(#d8d8d8, #d8d8d8) 3px 5px / calc(100% - 8px) 1px no-repeat,
        linear-gradient(#d8d8d8, #d8d8d8) 3px 5px / 1px 100% no-repeat,
        linear-gradient(#d8d8d8, #d8d8d8) right 5px top 5px / 1px 100% no-repeat,
        linear-gradient(#d8d8d8, #d8d8d8) 3px 100% / calc(100% - 8px) 1px no-repeat;
}

/* side panel */
.side {
    display: flex;
    flex-direction: column;
    width: 96px;
    background: linear-gradient(#fff, #eee);
}
.days {
    display: flex;
    flex-direction: column;
    align-items: center;
    height: 114px;
    padding-top: 2px;
    background: #f1f1f1;
}
.date {
    display: flex;
    align-items: center;
    width: 100%;
    height: 22px;
    margin: 2px 0 5px;
    padding: 0 4px 0 1px;
    border: 1px solid #7a7a7a;
    background: #fff;
}
.date input {
    width: 80px;
    border: 0;
    font: bold 14px/18px "Liberation Sans", Arial, sans-serif;
}
.today {
    margin-top: 5px;
    font-size: 16px;
    font-weight: bold;
    line-height: 20px;
    color: #e60000;
}
.jump {
    display: flex;
    height: 60px;
    font-weight: bold;
}
.steps {
    flex: 1;
}
.steps p {
    display: flex;
    align-items: center;
    height: 29px;
}
.steps p + p {
    align-items: baseline;
    gap: 3px;
    padding: 4px 0 0 2px;
}
.n1s {
    width: 31px;
    height: 22px;
    border: 2px solid #eee;
    background: #edf5f0;
    font-size: 14px;
    color: #800000;
}
.n3 {
    width: 19px;
    font-size: 26px;
    color: #808000;
}
.n2 {
    font-size: 32px;
    color: #008000;
}
.n28 {
    width: 19px;
    font-size: 16px;
    color: #008080;
}
.n14 {
    width: 25px;
    font-size: 20px;
    color: #800080;
}
.n7 {
    font-size: 26px;
    color: #000080;
}
.n1 {
    width: 21px;
    height: 58px;
    margin-right: 5px;
    padding-top: 4px;
    border: 1px solid #98c8f0;
    background: #bcdcf8;
    font-size: 38px;
    color: #800000;
}
.spans {
    display: flex;
    align-items: center;
    gap: 4px;
    height: 44px;
    padding: 4px 2px 0;
    background: linear-gradient(#fff, #eee);
    font-size: 22px;
    font-weight: bold;
    line-height: 24px;
}
.w { color: #0a78e0; }
.m { color: #6c3428; }
.nd {
    margin-left: auto;
    color: #c82850;
}
.acts {
    display: flex;
    flex-wrap: wrap;
    align-items: center;
    background: #f1f1f1;
}
.acts button {
    display: flex;
    align-items: center;
    justify-content: center;
}
.two button {
    width: 50%;
    height: 38px;
}
.three {
    justify-content: space-between;
    height: 36px;
    padding: 0 2px 4px 0;
}
.foot {
    display: flex;
    flex-direction: column;
    align-items: center;
    margin-top: auto;
}
.zoom {
    display: flex;
    align-items: center;
    justify-content: space-between;
    width: 100%;
    height: 28px;
    padding: 0 3px 0 5px;
    font-weight: bold;
    color: #000080;
}
.zoom button {
    font-size: 15px;
}
.zoom span {
    color: #e00000;
}
.foot input {
    width: 100%;
    height: 22px;
    border: 1px solid #707070;
    background: #edf5f0;
    font: bold 11px/20px "Liberation Sans", Arial, sans-serif;
    text-align: center;
    color: #000080;
}
.test {
    padding-top: 2px;
    font-weight: bold;
    color: #b8b8b8;
    line-height: 13px;
}
.ain {
    font: 15px/20px "DejaVu Sans", sans-serif;
}

/* schedule */
.panel {
    display: flex;
    flex-direction: column;
    flex: 1;
    min-width: 0;
    margin: 3px 0;
    padding: 1px;
    border: 1px solid #a0a0a0;
    background: #fff;
}
.sheet {
    display: flex;
    flex: 1;
}
.viewport {
    flex: 1;
    min-width: 0;
    margin-right: 33px;
    border-right: 3px solid #e8e8e8;
}
.schedule {
    width: 100%;
    table-layout: fixed;
    border-spacing: 0;
}
.time { width: 60px; }
.doc { width: 181px; }
.wait { width: 161px; }
.schedule th {
    padding: 0 2px 0 0;
    border-bottom: 1px solid #c8dccc;
    background: linear-gradient(#078080, #b2d4ba);
    font-weight: bold;
    text-align: right;
    color: #fff;
}
.banner th {
    height: 42px;
}
.schedule .corner {
    border: 0;
    background: linear-gradient(#ececec, #d4d4d4);
}
.schedule .red {
    border: 1px solid #4cb46a;
    background: linear-gradient(#f00, #cc0000);
}
.names th {
    height: 34px;
}
.schedule .names th + th {
    padding-left: 6px;
    border-left: 1px solid #b8d0c0;
    text-align: left;
}
tbody th {
    height: 41px;
}
.schedule .now {
    background: linear-gradient(#f00, #cc0000);
    padding-right: 6px;
    color: #ffe838;
}
.schedule .rest th {
    height: 11px;
    border: 0;
    background: #078080;
}
.schedule td {
    height: 1px;
    padding: 2px 2px 2px 1px;
    border-left: 1px solid #f0f0c0;
    border-bottom: 1px solid #f4f4c8;
    background-color: #ffff64;
}
.schedule .off {
    border-color: #f0e4e4;
    background-color: #ff9494;
}
.schedule .free {
    border-color: #eee;
    background-color: #fff;
}
.gone {
    background-image: linear-gradient(45deg, transparent 48%, #d8cc20 48% 51%, transparent 51%);
    background-size: 20px 20px;
}
.off.gone {
    background-image: linear-gradient(45deg, transparent 48%, #b83820 48% 51%, transparent 51%);
}

/* appointment card */
.card {
    --ink: #2850d0;
    --hatch: #1c54a8;
    position: relative;
    display: flex;
    flex-direction: column;
    height: 100%;
    contain: size;
    overflow: hidden;
    border: 3px solid #147820;
    border-top: 1px solid #a0f4b8;
    border-left-color: #a0f4b0;
    background: linear-gradient(#60bc64, #44a84c);
}
.card.picked {
    outline: 1px dotted #555;
}
.card.pink {
    --ink: #cc0cc0;
    --hatch: #b010a8;
    border-color: #ff8cf4 #a8089c #a8089c #ff8cf4;
    background: linear-gradient(#f850e8, #f41ce4 70%);
}
.card.plum {
    --hatch: #300030;
    border-color: #e83cdc #a8089c #a8089c #f06ce4;
    background: #8c048c;
}
.card.red {
    border-color: #ff9c9c #b81818 #b81818 #ffa4a4;
    background: #ff3c3c;
}
.card.past::after {
    content: "";
    position: absolute;
    inset: 19px 0 0;
    background: linear-gradient(45deg, transparent 48%, var(--hatch) 48% 51%, transparent 51%) 0 0 / 20px 20px;
}
.head {
    display: flex;
    align-items: center;
    flex: none;
    height: 18px;
    border: 1px solid #0a18a0;
    background: linear-gradient(#2448f8, #1030e8);
    font-weight: bold;
    color: #d0dcff;
    white-space: nowrap;
}
.pink .head {
    border-color: #900088;
    background: linear-gradient(#d010c4, #a8049c);
    color: #ffd0ff;
}
.plum .head {
    border-color: #200020;
    background: #3c043c;
    color: #f0c8f8;
}
.late .head {
    border-color: #2c2c78;
    background: #5454a0;
    color: #fff;
}
.head b {
    width: 20px;
    height: 15px;
    margin: 0 2px 0 1px;
    border: 2px solid #8c4830;
    border-radius: 50%;
    font-size: 10px;
    font-weight: bold;
    line-height: 11px;
    text-align: center;
    color: #ff7c70;
}
.head .f {
    border-color: #a89410;
    color: #f0f030;
}
.head .n {
    width: 18px;
    height: 13px;
    margin: 0 3px 0 2px;
    border: 1px solid #b8c8ff;
    border-radius: 0;
    font-style: italic;
}
.head span {
    flex: 1;
    min-width: 0;
}
.head .long {
    font-size: 11px;
}
.head .sm,
.pair .sm {
    font-size: 10px;
}
.head em {
    font-style: normal;
    color: #10d850;
}
.head svg {
    width: 16px;
    height: 14px;
    margin: 1px 1px 0 2px;
    color: #3c8c28;
}
.red .head em,
.red .head svg {
    color: #d82848;
}
.body {
    display: flex;
    flex: 1;
    min-height: 0;
    color: var(--ink);
}
.info {
    display: flex;
    flex-direction: column;
    flex: 1;
    min-width: 0;
    padding-left: 2px;
}
.room {
    flex: none;
    width: 16px;
    margin: 2px 1px 2px 0;
    border: 1px solid #ffe8a0;
    background: #ffb060;
    overflow: hidden;
    writing-mode: vertical-rl;
    font-weight: bold;
    line-height: 14px;
    white-space: nowrap;
}
.pair {
    display: flex;
    align-items: center;
    justify-content: space-between;
    flex: none;
    height: 40px;
    padding: 0 2px 0 6px;
    font-size: 14px;
    font-weight: bold;
    white-space: nowrap;
}
.pair.tall { height: 60px; padding-right: 24px; }
.pair.mid { height: 28px; padding-right: 8px; }
.pair.short { height: 26px; padding-right: 12px; }
.pair.thin { height: 20px; padding: 0 10px; font-size: 12px; font-weight: normal; }
.pair.small { height: 18px; padding: 0 12px 0 14px; font-size: 10px; }
.pair.low { height: 10px; }
.pair.clip { height: 8px; padding-right: 24px; }
.name {
    display: flex;
    flex-direction: column;
    align-items: center;
    font-size: 12px;
    line-height: 14px;
}
.name.big {
    font-size: 14px;
    line-height: 16px;
}
.cut {
    display: inline-block;
    height: 10px;
    overflow: hidden;
    line-height: 10px;
    vertical-align: middle;
}
.narrow {
    font-size: 10px;
    height: 8px;
    line-height: 8px;
}
.due {
    height: 40px;
    font-size: 20px;
    font-weight: bold;
    line-height: 42px;
    text-align: center;
}
.due.tall {
    height: 56px;
    line-height: 52px;
}
.due.little {
    height: 16px;
    font-size: 10px;
    line-height: 18px;
}
.ar {
    font: 14px/22px "DejaVu Sans", sans-serif;
    text-align: center;
    direction: rtl;
    white-space: nowrap;
}
.ar.tiny {
    font-size: 9px;
    line-height: 8px;
}
.note {
    font-size: 10px;
    font-weight: bold;
    line-height: 9px;
    text-align: center;
}
.offer {
    width: 130px;
    margin: auto auto 4px;
    font-size: 16px;
    line-height: 18px;
    text-align: center;
    color: #000;
}
.offer.mini {
    width: auto;
    font-size: 9px;
    line-height: 14px;
    white-space: nowrap;
}
.offer.tight {
    margin-bottom: 1px;
    font-size: 8px;
    line-height: 10px;
}
.offer.micro {
    width: auto;
    font-size: 6px;
    line-height: 8px;
    white-space: nowrap;
}
.offer + .dots,
.pair + .dots {
    margin-top: auto;
    padding-bottom: 5px;
}
.offer + .dots {
    margin-top: 0;
}
.dots {
    display: flex;
    flex-wrap: wrap;
    flex: none;
    max-width: 146px;
}
.dots i {
    --c: #08f008;
    width: calc(var(--n) * 8px);
    height: 8px;
    margin-bottom: 1px;
    padding: 1px 0;
    background: repeating-linear-gradient(90deg, #5c9a5c 0 1px, var(--c) 1px 7px, #6c8c54 7px 8px) content-box;
}
.dots .u {
    padding-bottom: 0;
    border-bottom: 1px solid #ecc878;
}
.dots .y { --c: #f8f808; }
.dots .r { --c: #f00808; }
.dots .l { --c: #98a4f0; }
.dots .k,
.dots .c {
    padding: 2px 0;
    background: repeating-linear-gradient(90deg, #000 0 2px, #98a4f0 2px 6px, #000 6px 8px) content-box, #000;
}
.plum .dots .k,
.pink .dots .k {
    background: repeating-linear-gradient(90deg, #000 0 2px, #e838e0 2px 6px, #000 6px 8px) content-box, #000;
}
.dots .c {
    background: repeating-linear-gradient(90deg, #18e8f8 0 2px, #70b0f4 2px 6px, #18e8f8 6px 8px) content-box, #18e8f8;
}
.trace {
    width: 30px;
    margin: 9px auto 0;
    border-top: 1px dashed #103818;
}
.trace.blue {
    width: 90px;
    margin-top: 4px;
    border: 0;
    height: 2px;
    background: linear-gradient(90deg, #2868b8 10px, transparent 10px 72px, #2868b8 72px);
}

/* scroll bars */
.vbar {
    display: flex;
    flex-direction: column;
    align-items: center;
    justify-content: space-between;
    width: 17px;
    padding: 6px 0 8px;
    background: #f0f0f0;
}
.vbar span {
    width: 15px;
    height: 17px;
    margin-top: 398px;
    background: #cdcdcd;
}
.hbar {
    display: flex;
    align-items: center;
    gap: 7px;
    height: 17px;
    padding: 0 22px 0 5px;
    background: #f0f0f0;
}
.hbar span {
    width: 17px;
    height: 15px;
    margin-left: auto;
    background: #cdcdcd;
}

/* right rail */
.alerts {
    width: 38px;
    font-size: 16px;
    line-height: 20px;
    text-align: center;
}
.alerts a {
    display: flex;
    flex-direction: column;
    align-items: center;
    height: 55px;
    background: linear-gradient(#c8e4d0, #b0d8bc);
}
.alerts .mail {
    height: 54px;
    padding-top: 5px;
    background: #fff;
}
.alerts .none {
    color: #a0a0a0;
}

/* status line and taskbar */
.status {
    display: flex;
    justify-content: space-between;
    height: 23px;
    padding-left: 38px;
    border-top: 1px solid #d4d4d4;
    background: #f0f0f0;
    font: 12px/21px "DejaVu Sans Condensed", "DejaVu Sans", sans-serif;
}
.taskbar {
    display: flex;
    height: 40px;
    background: #020306;
    color: #fff;
}
.taskbar > button {
    display: flex;
    align-items: center;
    justify-content: center;
    width: 49px;
}
.taskbar .open {
    background: linear-gradient(#76b9ed, #76b9ed) bottom / 40px 2px no-repeat;
}
.taskbar .active {
    background-color: #333538;
    background-size: 100% 2px;
}
.dx,
.skype {
    width: 22px;
    height: 22px;
    border-radius: 50%;
    background: #d8252c;
    font-size: 12px;
    font-weight: bold;
    line-height: 22px;
    text-align: center;
}
.skype {
    border-radius: 9px 13px;
    background: #12a5ea;
    font-size: 16px;
}
.tray {
    display: flex;
    align-items: center;
    gap: 9px;
    margin-left: auto;
    padding-right: 15px;
    font-family: "Open Sans", "Noto Sans", sans-serif;
}
.tray time {
    line-height: 18px;
    text-align: center;
}
.notes {
    position: relative;
    width: 26px;
    height: 20px;
    margin-left: 6px;
}
.notes span {
    position: absolute;
    left: 6px;
    top: 7px;
    width: 20px;
    height: 16px;
    border: 1px solid #777;
    border-radius: 8px;
    background: #333;
    font-size: 11px;
    font-weight: bold;
    line-height: 14px;
}
.watermark {
    position: fixed;
    right: 73px;
    bottom: 88px;
    width: 236px;
    font: 14px/20px "Open Sans", "Noto Sans", sans-serif;
    color: #bcbcbc;
    pointer-events: none;
}
.watermark strong {
    display: block;
    font-size: 19px;
    font-weight: normal;
    line-height: 26px;
}
```
